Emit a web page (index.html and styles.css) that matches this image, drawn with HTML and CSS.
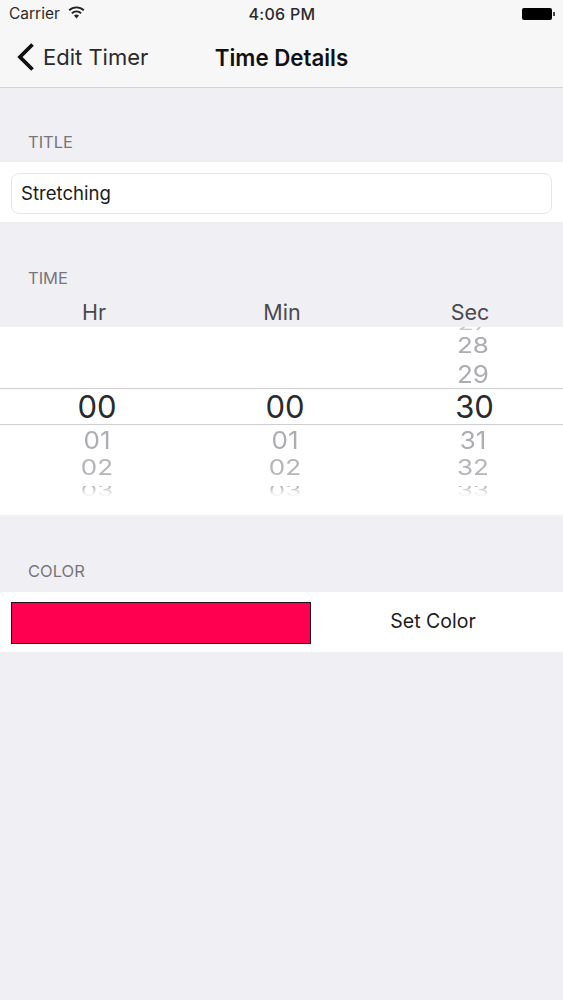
FILE: index.html
```html
<!DOCTYPE html>
<html lang="en">
<head>
<meta charset="utf-8">
<title>Time Details</title>
<link rel="stylesheet" href="styles.css">
</head>
<body>
<div class="screen">
  <header class="chrome">
    <div class="status">
      <div class="status-left">
        <span>Carrier</span>
        <svg class="wifi" width="17" height="13" viewBox="0 0 17 13"><path d="M8.5 12.5 6 9.6a3.6 3.6 0 0 1 5 0Z" fill="#222"/><path d="M3.9 7.2a6.6 6.6 0 0 1 9.2 0M1.2 4.3a10.5 10.5 0 0 1 14.6 0" fill="none" stroke="#222" stroke-width="1.9"/></svg>
      </div>
      <div class="status-time">4:06 PM</div>
      <div class="status-right">
        <span class="battery"></span><span class="battery-tip"></span>
      </div>
    </div>
    <nav class="nav">
      <div class="back">
        <svg width="20" height="30" viewBox="0 0 20 30"><path d="M17.5 2.5 5 15l12.5 12.5" fill="none" stroke="#111" stroke-width="3.8"/></svg>
        <span>Edit Timer</span>
      </div>
      <div class="nav-title">Time Details</div>
    </nav>
  </header>

  <div class="label label-title">TITLE</div>
  <section class="panel panel-title">
    <div class="field">Stretching</div>
  </section>

  <div class="label label-time">TIME</div>
  <div class="heads"><span>Hr</span><span>Min</span><span>Sec</span></div>
  <section class="picker">
    <div class="band band-up">
      <div></div><div></div>
      <div class="cell">
        <span class="n n27">27</span>
        <span class="n n28">28</span>
        <span class="n n29">29</span>
      </div>
    </div>
    <div class="band band-sel">
      <div class="sel">00</div><div class="sel">00</div><div class="sel sel-sec">30</div>
    </div>
    <div class="band band-down">
      <div class="cell"><span class="n n1">01</span><span class="n n2">02</span><span class="n n3">03</span></div>
      <div class="cell"><span class="n n1">01</span><span class="n n2">02</span><span class="n n3">03</span></div>
      <div class="cell"><span class="n n1">31</span><span class="n n2">32</span><span class="n n3">33</span></div>
    </div>
  </section>

  <div class="label label-color">COLOR</div>
  <section class="panel panel-color">
    <div class="swatch"></div>
    <div class="set">Set Color</div>
  </section>
</div>
</body>
</html>
```

FILE: styles.css
```css
* { box-sizing: border-box; }
html, body { margin: 0; padding: 0; }
body { background: #f0eff3; font-family: Inter, "Liberation Sans", sans-serif; color: #1c1c1e; }
.screen { width: 563px; height: 1000px; overflow: hidden; }

.chrome { height: 88px; background: #f7f7f8; border-bottom: 1px solid #d2d2d4; }
.status { height: 28px; display: grid; grid-template-columns: 1fr auto 1fr; align-items: center; padding: 0 8px 1px 9px; font-size: 15.5px; color: #2a2a2c; }
.status-left { display: flex; align-items: center; gap: 8px; }
.wifi { margin-top: -3px; }
.status-time { font-weight: 500; font-size: 16px; letter-spacing: .3px; }
.status-right { display: flex; justify-content: flex-end; align-items: center; }
.battery { width: 30px; height: 12px; background: #000; border-radius: 2px; }
.battery-tip { width: 2px; height: 4px; background: #444; margin-left: 1px; }

.nav { height: 59px; display: grid; grid-template-columns: 1fr; align-items: center; position: relative; }
.back { display: flex; align-items: center; gap: 8px; padding-left: 15px; font-size: 22px; color: #2a2a2c; padding-bottom: 1px; }
.nav-title { position: absolute; left: 0; right: 0; text-align: center; font-size: 22.3px; font-weight: 600; color: #111; top: 16px; }

.label { padding-left: 28px; font-size: 16.5px; color: #77777b; line-height: 20px; }
.label-title { margin-top: 44px; }
.panel { background: #fff; }
.panel-title { margin-top: 10px; height: 60px; padding: 11px 11px 8px; }
.field { height: 41px; border: 1px solid #e6e6e8; border-radius: 8px; padding-left: 9px; font-size: 18.6px; line-height: 38px; color: #1c1c1e; }

.label-time { margin-top: 46px; }
.heads { display: grid; grid-template-columns: repeat(3, 188px); height: 39px; padding-top: 10px; text-align: center; font-size: 21.5px; line-height: 28px; color: #4a4a4e; }

.picker { background: #fff; height: 188px; }
.band { display: grid; grid-template-columns: repeat(3, 188px); padding-left: 3px; overflow: hidden; }
.band-up { height: 61px; }
.band-sel { height: 37px; border-top: 1px solid #cfcfd2; border-bottom: 1px solid #cfcfd2; }
.band-down { height: 90px; }
.cell { display: flex; flex-direction: column; align-items: center; }
.sel { text-align: center; font-size: 31px; line-height: 36px; color: #2a2a2c; }
.sel-sec { padding-left: 3px; }
.n { display: block; height: 28px; line-height: 28px; font-size: 26px; color: #aeaeb2; flex: none; }
.n27 { margin-top: -12px; height: 20px; line-height: 20px; transform: scaleY(.6); color: #c8c8cc; }
.n28 { margin-top: -4px; transform: scaleY(.85); }
.n29 { margin-top: 1px; transform: scaleY(.95); }
.n1 { margin-top: 1px; transform: scaleY(.95); }
.n2 { transform: scaleY(.8); color: #b6b6ba; }
.n3 { height: 18px; line-height: 18px; transform: scaleY(.6); color: transparent; background: linear-gradient(#bcbcc0 15%, #f4f4f5 80%); -webkit-background-clip: text; background-clip: text; }

.label-color { margin-top: 46px; }
.panel-color { margin-top: 11px; height: 60px; padding: 10px 0 8px 11px; display: flex; }
.swatch { width: 300px; height: 42px; background: #ff0050; border: 1px solid #20141a; }
.set { flex: 1; text-align: center; font-size: 19.5px; line-height: 39px; color: #1c1c1e; padding-right: 8px; }
```
